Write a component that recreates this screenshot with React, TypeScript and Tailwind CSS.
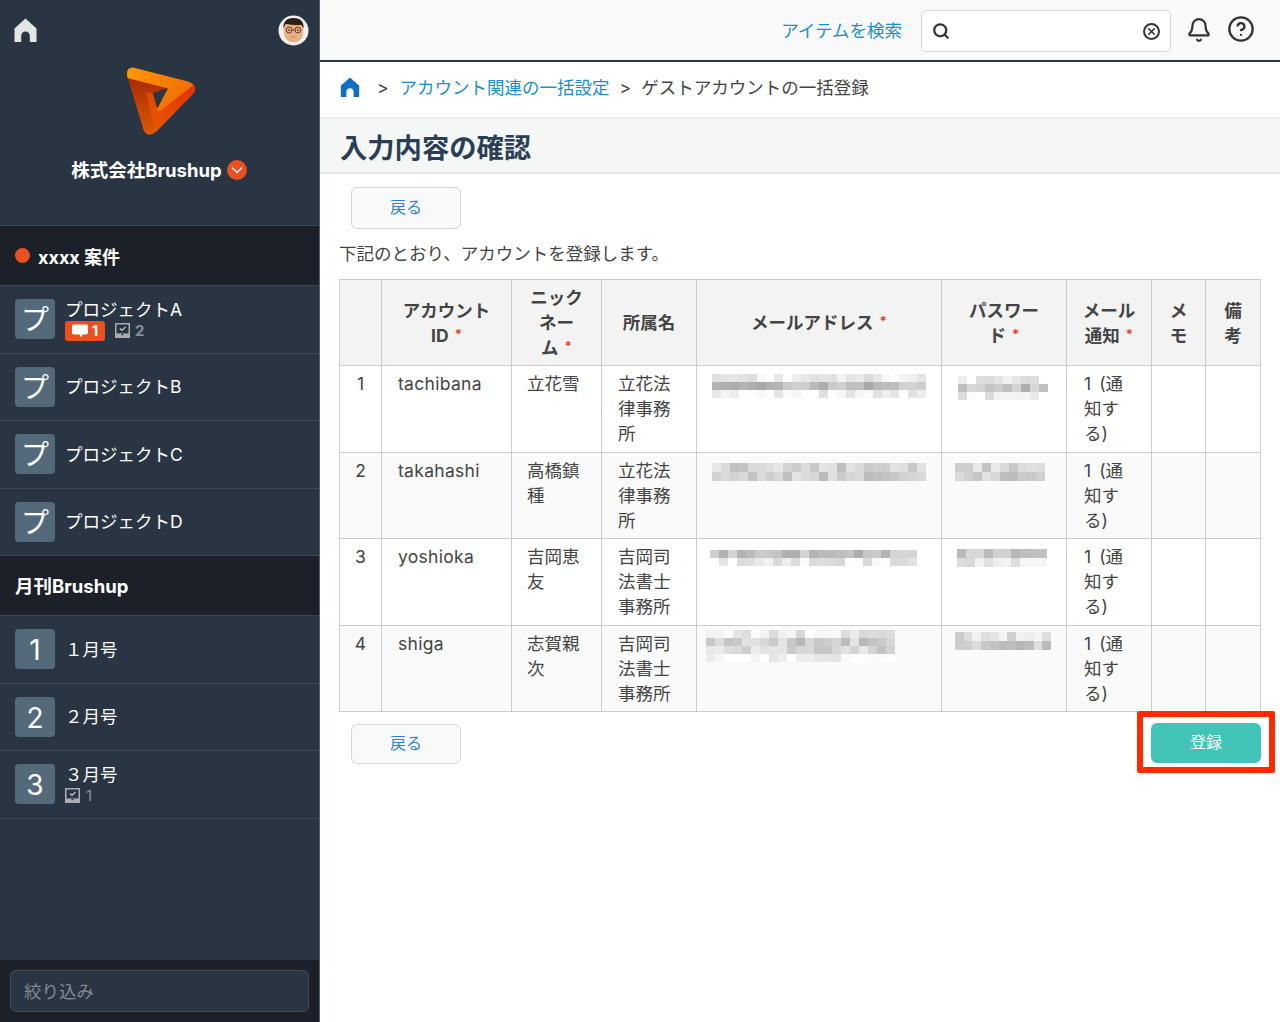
import { Bell, CircleHelp, Search, X } from 'lucide-react'

const HomeIcon = ({ className }: { className: string }) => (
  <svg viewBox="0 0 24 25" className={className} fill="currentColor">
    <path d="M12 0.5 L23.5 11 V25 H16.5 V18.5 a4.5 4.5 0 0 0 -9 0 V25 H0.5 V11 Z" />
  </svg>
)

const TaskIcon = ({ className }: { className: string }) => (
  <svg viewBox="0 0 15 15" className={className}>
    <rect x="0" y="0" width="15" height="15" fill="#a9adb1" />
    <rect x="1.5" y="1.5" width="12" height="8.5" fill="#2a3544" />
    <path d="M1.5 10 H5 L7.5 12.500 L10 10 H13.500 V10.500 H1.500 Z" fill="#2a3544" />
    <path d="M5 5.500 L7 7.500 L10.500 4" stroke="#c9cccf" strokeWidth="1.200" fill="none" />
  </svg>
)

const Logo = () => (
  <svg viewBox="120 60 80 80" className="w-20 h-20">
    <defs>
      <linearGradient id="logoTop" x1="0" y1="0" x2="1" y2="0.6">
        <stop offset="0" stopColor="#ff9a00" />
        <stop offset="1" stopColor="#f26a00" />
      </linearGradient>
      <linearGradient id="logoLeft" x1="0" y1="0" x2="0" y2="1">
        <stop offset="0" stopColor="#a82a00" />
        <stop offset="1" stopColor="#dd5a08" />
      </linearGradient>
      <linearGradient id="logoRight" x1="0" y1="1" x2="1" y2="0">
        <stop offset="0" stopColor="#e85a00" />
        <stop offset="1" stopColor="#e23200" />
      </linearGradient>
    </defs>
    <path d="M127.500 77 L168 88 L153 93 L146 92 L155.500 131 Q152 136 148 134.500 Q144 133 143 128 Z" fill="url(#logoLeft)" />
    <path d="M146 92 L153 93 L158 111 L170 90 L193 84 Q197 88 194 93 L155 133 Z" fill="url(#logoRight)" />
    <path d="M127 74 Q126.500 67.500 133 67.500 L188 81.500 Q192 82.500 193.500 85 L160 111 Q157 112 156.500 108 L168 88.500 L127.500 78 Z" fill="url(#logoTop)" />
    <path d="M153 93 L167 89.500 L157.500 108.500 Z" fill="#2a3544" />
  </svg>
)

const Avatar = () => (
  <svg viewBox="0 0 32 32" className="w-[31px] h-[31px]">
    <circle cx="16" cy="16" r="15.500" fill="#eef0f0" />
    <path d="M6 17 Q6 4 16 4 Q26 4 26 17 Q26 28 16 28 Q6 28 6 17 Z" fill="#e9ae82" />
    <path d="M5.500 14 Q5 3 16 3 Q27 3 26.500 14 L24 10 Q16 11 8 9 Z" fill="#2a1c16" />
    <circle cx="11.500" cy="15.500" r="3" fill="none" stroke="#5b3a24" strokeWidth="1" />
    <circle cx="20.500" cy="15.500" r="3" fill="none" stroke="#5b3a24" strokeWidth="1" />
    <path d="M14.500 15.500 H17.500" stroke="#5b3a24" strokeWidth="1" />
    <circle cx="11.500" cy="15.500" r="0.900" fill="#40261a" />
    <circle cx="20.500" cy="15.500" r="0.900" fill="#40261a" />
    <path d="M13.500 22 Q16 24 18.500 22" stroke="#c4835b" strokeWidth="0.900" fill="none" />
  </svg>
)

const SideRow = ({ mark, title, children }: { mark: string; title: string; children?: React.ReactNode }) => (
  <div className="h-[67.5px] flex items-center pl-[15px] border-b border-[#3b4757]">
    <div className="w-10 h-10 pt-[2px] rounded-[4px] bg-[#546a7b] flex items-center justify-center text-white text-[28px] font-normal leading-none">
      {mark}
    </div>
    <div className="ml-[10px] pt-[1px] text-white">
      <div className="text-[17.500px] leading-[22px]">{title}</div>
      {children}
    </div>
  </div>
)

// モザイク部分
const Mosaic = ({ rows, seed, cell, tall, className }: { rows: number[]; seed: number; cell: number; tall?: boolean; className: string }) => (
  <div className={className}>
    {rows.map((base, r) => (
      <div key={r} className={`flex ${tall ? 'h-[9px]' : 'h-2'}`}>
        {Array.from({ length: cell }).map((_, c) => {
          const x = Math.sin((c + 1) * 12.9898 + (r + 1) * 78.233 + seed * 37.7) * 43758.5453
          const v = Math.min(255, Math.round(base + (x - Math.floor(x) - 0.5) * 44))
          return <div key={c} className="w-[9px]" style={{ background: `rgb(${v},${v},${v})` }} />
        })}
      </div>
    ))}
  </div>
)

const rows = [
  {
    no: '1', id: 'tachibana', nick: '立花雪', org: '立花法\n律事務\n所',
    email: <Mosaic rows={[240, 190, 242]} seed={1} cell={24} className="mt-[3px]" />,
    pw: <Mosaic rows={[236, 195, 240]} seed={2} cell={10} className="mt-[5px] ml-[2px]" />,
  },
  {
    no: '2', id: 'takahashi', nick: '高橋鎮\n種', org: '立花法\n律事務\n所',
    email: <Mosaic rows={[212, 206]} seed={3} cell={24} tall className="mt-[5px]" />,
    pw: <Mosaic rows={[212, 206]} seed={4} cell={10} tall className="mt-[5px] -ml-[1px]" />,
  },
  {
    no: '3', id: 'yoshioka', nick: '吉岡恵\n友', org: '吉岡司\n法書士\n事務所',
    email: <Mosaic rows={[194, 236]} seed={5} cell={23} className="mt-[6px] -ml-[2px]" />,
    pw: <Mosaic rows={[198, 234]} seed={6} cell={10} tall className="mt-[5px] ml-[1px]" />,
  },
  {
    no: '4', id: 'shiga', nick: '志賀親\n次', org: '吉岡司\n法書士\n事務所',
    email: <Mosaic rows={[236, 206, 216, 248]} seed={7} cell={21} className="-mt-[1px] -ml-[6px]" />,
    pw: <Mosaic rows={[222, 202]} seed={8} cell={11} tall className="mt-[1px] -ml-[1px]" />,
  },
]

const Req = () => <span className="text-[#e8432a] text-[13px] leading-none align-[3px] ml-[6px]">*</span>

const BackButton = ({ className }: { className: string }) => (
  <button className={`block w-[110px] ml-3 pb-[3px] rounded-[6px] bg-[#f8f9f9] border-[1.5px] border-[#d6d6d6] text-[#3a80c9] text-[16px] ${className}`}>
    戻る
  </button>
)

const th = 'border border-[#ccc] px-[10px] py-[5px] text-center font-bold text-[#444] bg-[#f3f3f3] leading-[25px]'
const td = 'border border-[#ccc] px-[15px] py-[5px] align-top whitespace-pre-line leading-[25px] text-[#444]'

export default function App() {
  return (
    <div className="flex w-[1280px] h-[1022px] overflow-hidden bg-white font-['Inter','Noto_Sans_CJK_JP',sans-serif] text-[17.500px]">
      {/* Sidebar */}
      <aside className="w-[320px] shrink-0 flex flex-col bg-[#2a3544] border-r border-[#555c66]">
        <div className="h-[226px] shrink-0 border-b border-[#3b4757] relative">
          <div className="flex items-start justify-between pl-[14px] pr-[10px] pt-[15px]">
            <HomeIcon className="w-[23px] h-[24px] text-[#e3e5e7] mt-[3px]" />
            <Avatar />
          </div>
          <div className="flex justify-center mt-[14px]">
            <Logo />
          </div>
          <div className="flex items-center justify-center mt-[17px] -ml-[1px] gap-[5px]">
            <span className="text-white font-bold text-[18.500px] leading-[26px]">株式会社Brushup</span>
            <span className="w-5 h-5 rounded-full bg-[#ea5021] flex items-center justify-center">
              <svg viewBox="0 0 12 8" className="w-3 h-2" fill="none" stroke="#fff" strokeWidth="1.300">
                <path d="M1 1.500 L6 6.500 L11 1.500" />
              </svg>
            </span>
          </div>
        </div>

        <div className="h-[60px] shrink-0 bg-[#1c2029] border-b border-[#3b4757] flex items-center pl-[15px]">
          <span className="w-[15px] h-[15px] rounded-full bg-[#ea5021] mr-2" />
          <span className="pt-[3px] text-white font-bold text-[18px]">xxxx 案件</span>
        </div>

        <SideRow mark="プ" title="プロジェクトA">
          <div className="flex items-center h-5 text-[15px] font-bold">
            <span className="flex items-center justify-center gap-[4px] w-10 h-[20px] rounded-[3px] bg-[#ea5021]">
              <svg viewBox="0 0 16 14" className="w-4 h-[14px]" fill="#fff">
                <path d="M2 0.500 H14 Q16 0.500 16 2.500 V8.500 Q16 10.500 14 10.500 H10.500 L9 13.500 L7.500 10.500 H2 Q0 10.500 0 8.500 V2.500 Q0 0.500 2 0.500 Z" />
              </svg>
              1
            </span>
            <TaskIcon className="w-[15px] h-[15px] ml-[10px]" />
            <span className="ml-[5px] text-[#8b9097]">2</span>
          </div>
        </SideRow>
        <SideRow mark="プ" title="プロジェクトB" />
        <SideRow mark="プ" title="プロジェクトC" />
        <SideRow mark="プ" title="プロジェクトD" />

        <div className="h-[60px] shrink-0 bg-[#1c2029] border-b border-[#3b4757] flex items-center pl-[15px]">
          <span className="pt-[3px] text-white font-bold text-[18.500px]">月刊Brushup</span>
        </div>

        <SideRow mark="1" title="１月号" />
        <SideRow mark="2" title="２月号" />
        <SideRow mark="3" title="３月号">
          <div className="flex items-center h-5 text-[15px] text-[#8b9097]">
            <TaskIcon className="w-[15px] h-[15px]" />
            <span className="ml-[6px]">1</span>
          </div>
        </SideRow>

        <div className="mt-auto h-[62px] bg-[#1c2029] px-[10px] flex items-center">
          <div className="w-full h-[42px] pt-[2px] rounded-[6px] bg-[#2a3544] border border-[#414c5b] flex items-center pl-[13px] text-[#838991]">
            絞り込み
          </div>
        </div>
      </aside>

      {/* Main */}
      <main className="flex-1 min-w-0">
        <header className="h-[62px] bg-[#f9f9f9] border-b-2 border-[#2c3848] flex items-center justify-end pr-[25px]">
          <span className="pt-[3px] text-[#1b8fcb] mr-[19px]">アイテムを検索</span>
          <div className="w-[250px] h-[42px] mt-[2px] bg-white border border-[#d6d6d6] rounded-[5px] flex items-center justify-between px-[10px]">
            <Search className="w-[18px] h-[18px] text-[#333]" strokeWidth={3} />
            <span className="w-[17px] h-[17px] rounded-full border-2 border-[#333] flex items-center justify-center">
              <X className="w-[11px] h-[11px] text-[#333]" strokeWidth={3.500} />
            </span>
          </div>
          <Bell className="w-[26px] h-[26px] ml-[15px] text-[#333]" strokeWidth={2} />
          <CircleHelp className="w-[28px] h-[28px] ml-[15px] -mt-[3px] text-[#333]" strokeWidth={2} />
        </header>

        <nav className="h-[57px] border-b-2 border-[#eeeeee] flex items-center pl-[20px] pb-[3px] text-[#444]">
          <HomeIcon className="w-[20px] h-[20px] -mt-[2px] text-[#0e6fc4]" />
          <span className="ml-[17px] mr-[11px]">&gt;</span>
          <span className="text-[#1b8fcb]">アカウント関連の一括設定</span>
          <span className="ml-[10px] mr-[10px]">&gt;</span>
          <span>ゲストアカウントの一括登録</span>
        </nav>

        <div className="h-[55px] pt-[7px] bg-[#f5f7f7] border-b-2 border-[#e6e6e6] flex items-center pl-[20px]">
          <h1 className="text-[27.300px] font-bold text-[#2a3f55] leading-none">入力内容の確認</h1>
        </div>

        <div className="pt-[13px] pl-[19px]">
          <BackButton className="h-[42px]" />
          <p className="mt-[12px] mb-[13px] leading-[25px] text-[#444]">下記のとおり、アカウントを登録します。</p>

          <table className="table-fixed border-collapse w-[921px]">
            <thead>
              <tr className="h-[86px]">
                <th className={`${th} w-[42px]`} />
                <th className={`${th} w-[130px]`}>アカウント<br />ID<Req /></th>
                <th className={`${th} w-[90px]`}>ニック<br />ネー<br />ム<Req /></th>
                <th className={`${th} w-[95px]`}>所属名</th>
                <th className={`${th} w-[245px]`}>メールアドレス<Req /></th>
                <th className={`${th} w-[125px]`}>パスワー<br />ド<Req /></th>
                <th className={`${th} w-[85px]`}>メール<br />通知<Req /></th>
                <th className={`${th} w-[54px]`}>メ<br />モ</th>
                <th className={`${th} w-[55px]`}>備<br />考</th>
              </tr>
            </thead>
            <tbody>
              {rows.map((r, i) => (
                <tr key={r.no} className={i % 2 === 1 ? 'h-[86px] bg-[#fafafa]' : 'h-[87px] bg-white'}>
                  <td className={`${td} text-center !px-0`}>{r.no}</td>
                  <td className={`${td} !pl-[16px] tracking-[0.3px]`}>{r.id}</td>
                  <td className={td}>{r.nick}</td>
                  <td className={`${td} !pl-[16px]`}>{r.org}</td>
                  <td className={td}>{r.email}</td>
                  <td className={`${td} !pl-[14px]`}>{r.pw}</td>
                  <td className={`${td} !pl-[17px] !pr-0`}>{'1\u00a0\u2009(通\n知す\nる)'}</td>
                  <td className={td} />
                  <td className={td} />
                </tr>
              ))}
            </tbody>
          </table>

          <div className="flex justify-between items-start w-[922px] mt-[11px]">
            <BackButton className="h-[40px] mt-[1px]" />
            <div className="relative">
              <button className="block w-[110px] h-[40px] pb-[2px] rounded-[6px] bg-[#42c4b7] text-white text-[16px]">登録</button>
              <div className="absolute -left-[14px] -right-[14px] -top-[12px] -bottom-[10px] border-[6px] border-[#ff2a00] rounded-[2px]" />
            </div>
          </div>
        </div>
      </main>
    </div>
  )
}
